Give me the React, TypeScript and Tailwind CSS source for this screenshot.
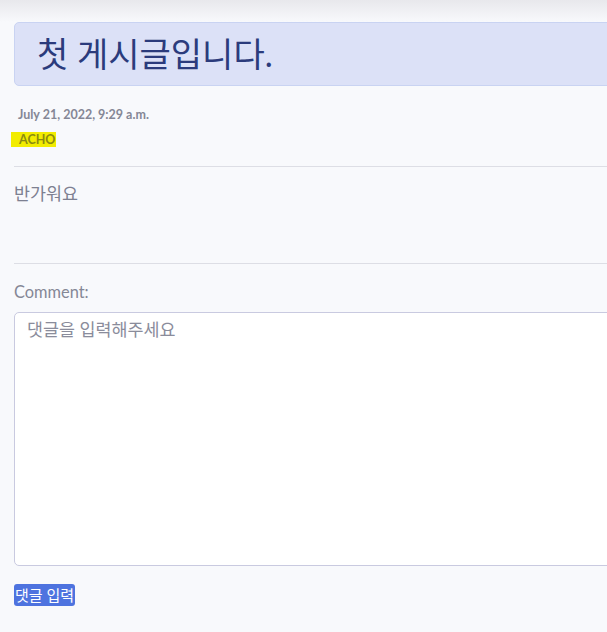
import React from "react";

export default function App() {
  const font = { fontFamily: "Lato, 'Noto Sans CJK KR', sans-serif" };
  return (
    <div
      className="w-[607px] h-[632px] overflow-hidden bg-[#f8f9fc] relative"
      style={font}
    >
      <div className="h-[22px] bg-gradient-to-b from-[#e8e8ec] to-[#f8f9fc]" />
      <div className="pl-[14px] w-[900px]">
        <div className="h-[64px] bg-[#dce1f7] border border-[#c9d3f2] rounded-[5px] flex items-center pl-[22px]">
          <h1 className="text-[34px] leading-none text-[#2b3b7c] font-normal">
            첫 게시글입니다.
          </h1>
        </div>
        <div className="mt-[22px] pl-[4px] text-[12.5px] font-bold text-[#858796] leading-[14px]">
          July 21, 2022, 9:29 a.m.
        </div>
        <div className="mt-[9px] -ml-[3px] leading-[13px]">
          <mark className="bg-[#f2ec00] text-[#8a8a10] text-[12.5px] font-bold pl-[8px] pr-[1px] py-0">
            ACHO
          </mark>
        </div>
        <hr className="mt-[20px] border-0 border-t border-[#dddee5]" />
        <p className="mt-[17px] text-[17.4px] text-[#7d8091] leading-[20px]">반가워요</p>
        <hr className="mt-[59px] border-0 border-t border-[#dddee5]" />
        <div className="mt-[18px] text-[16.4px] text-[#858796] leading-[20px]">Comment:</div>
        <textarea
          className="mt-[10px] block w-full h-[254px] bg-white border border-[#c9cae0] rounded-[5px] px-[12px] py-[6px] text-[17.4px] leading-[22px] placeholder:text-[#8a8c9b] resize-none outline-none"
          placeholder="댓글을 입력해주세요"
          style={font}
        />
        <button
          className="mt-[18px] bg-[#4e73df] text-white text-[15px] leading-[22px] rounded-[3px] px-[1px] h-[22px]"
          style={font}
        >
          댓글 입력
        </button>
      </div>
    </div>
  );
}
